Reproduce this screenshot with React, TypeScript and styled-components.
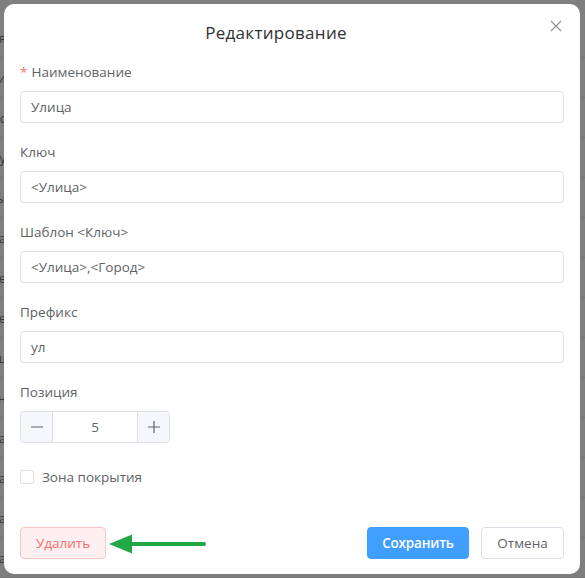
import React from "react";
import styled, { createGlobalStyle } from "styled-components";

const Global = createGlobalStyle`
  html, body { margin: 0; padding: 0; }
  body {
    width: 585px;
    height: 578px;
    overflow: hidden;
    background: #7f7f7f;
    font-family: "Open Sans", "Noto Sans", "DejaVu Sans", sans-serif;
  }
  * { box-sizing: border-box; }
`;

const Stage = styled.div`
  position: relative;
  width: 585px;
  height: 578px;
  background: #7f7f7f;
  overflow: hidden;
`;

const Behind = styled.div`
  display: flex;
  flex-direction: column;
  padding-top: 18px;
`;

const BehindRow = styled.div`
  height: 40px;
  display: flex;
  align-items: center;
  border-bottom: 1px solid #767676;
`;

const BehindCell = styled.div`
  width: 6px;
  overflow: hidden;
  direction: rtl;
  white-space: nowrap;
  font-size: 13px;
  color: #3a3a3a;
`;

const Dialog = styled.div`
  position: absolute;
  top: 4px;
  left: 4px;
  width: 576px;
  height: 570px;
  background: #fff;
  border-radius: 10px;
  display: flex;
  flex-direction: column;
`;

const Header = styled.div`
  position: relative;
  padding: 17px 48px 0 16px;
  text-align: center;
`;

const Title = styled.div`
  font-size: 17px;
  line-height: 24px;
  color: #303133;
  letter-spacing: 0.3px;
`;

const Close = styled.button`
  position: absolute;
  top: 16px;
  right: 18px;
  width: 12px;
  height: 12px;
  padding: 0;
  border: none;
  background: none;
  display: flex;
`;

const Body = styled.div`
  padding: 17px 16px 0;
  display: flex;
  flex-direction: column;
  flex: 1;
`;

const Field = styled.div`
  display: flex;
  flex-direction: column;
  margin-bottom: 19px;
`;

const Label = styled.label`
  font-size: 13.5px;
  line-height: 20px;
  color: #606266;
  margin-bottom: 9px;
`;

const Star = styled.span`
  color: #f56c6c;
  margin-right: 4px;
`;

const Input = styled.div`
  height: 32px;
  border: 1px solid #dcdfe6;
  border-radius: 4px;
  padding: 0 10px;
  display: flex;
  align-items: center;
  font-size: 13.5px;
  color: #606266;
`;

const Number = styled.div`
  width: 150px;
  height: 32px;
  border: 1px solid #dcdfe6;
  border-radius: 4px;
  display: flex;
  overflow: hidden;
`;

const Step = styled.div<{ $side: "left" | "right" }>`
  width: 32px;
  background: #f5f7fa;
  display: flex;
  align-items: center;
  justify-content: center;
  ${(p) => (p.$side === "left" ? "border-right" : "border-left")}: 1px solid #dcdfe6;
`;

const NumValue = styled.div`
  flex: 1;
  display: flex;
  align-items: center;
  justify-content: center;
  font-size: 13.5px;
  color: #606266;
`;

const CheckRow = styled.label`
  display: flex;
  align-items: center;
  height: 30px;
  gap: 8px;
`;

const Box = styled.span`
  width: 14px;
  height: 14px;
  border: 1px solid #dcdfe6;
  border-radius: 2px;
  background: #fff;
`;

const CheckText = styled.span`
  font-size: 13.5px;
  color: #606266;
`;

const Footer = styled.div`
  position: relative;
  display: flex;
  align-items: center;
  padding: 0 16px 15px;
  gap: 12px;
`;

const Button = styled.button<{ $kind: "danger" | "primary" | "plain" }>`
  height: 32px;
  padding: 0;
  border-radius: 4px;
  font-family: inherit;
  font-size: 13.5px;
  cursor: pointer;
  ${(p) =>
    p.$kind === "danger"
      ? `background:#fef0f0;border:1px solid #fbc4c4;color:#f56c6c;width:86px;`
      : p.$kind === "primary"
      ? `background:#409eff;border:1px solid #409eff;color:#fff;font-weight:600;width:102px;letter-spacing:-0.2px;`
      : `background:#fff;border:1px solid #dcdfe6;color:#606266;width:83px;`}
`;

const Spacer = styled.div`
  flex: 1;
`;

const Arrow = styled.svg`
  position: absolute;
  left: 101px;
  top: 5px;
`;

const rows = ["я", "и", "с", "у", "ы", "а", "е", "е", "ш", "н", "а", "а", "а", "а"];

export default function App() {
  return (
    <>
      <Global />
      <Stage>
        <Behind>
          {rows.map((r, i) => (
            <BehindRow key={i}>
              <BehindCell>{r}</BehindCell>
            </BehindRow>
          ))}
        </Behind>
        <Dialog>
          <Header>
            <Title>Редактирование</Title>
            <Close aria-label="close">
              <svg width="12" height="12" viewBox="0 0 12 12">
                <path d="M1 1L11 11M11 1L1 11" stroke="#909399" strokeWidth="1.2" />
              </svg>
            </Close>
          </Header>
          <Body>
            <Field>
              <Label>
                <Star>*</Star>Наименование
              </Label>
              <Input>Улица</Input>
            </Field>
            <Field>
              <Label>Ключ</Label>
              <Input>&lt;Улица&gt;</Input>
            </Field>
            <Field>
              <Label>Шаблон &lt;Ключ&gt;</Label>
              <Input>&lt;Улица&gt;,&lt;Город&gt;</Input>
            </Field>
            <Field>
              <Label>Префикс</Label>
              <Input>ул</Input>
            </Field>
            <Field>
              <Label>Позиция</Label>
              <Number>
                <Step $side="left">
                  <svg width="14" height="14" viewBox="0 0 14 14">
                    <path d="M1 7H13" stroke="#606266" strokeWidth="1.2" />
                  </svg>
                </Step>
                <NumValue>5</NumValue>
                <Step $side="right">
                  <svg width="14" height="14" viewBox="0 0 14 14">
                    <path d="M1 7H13M7 1V13" stroke="#606266" strokeWidth="1.2" />
                  </svg>
                </Step>
              </Number>
            </Field>
            <CheckRow>
              <Box />
              <CheckText>Зона покрытия</CheckText>
            </CheckRow>
          </Body>
          <Footer>
            <Button $kind="danger">Удалить</Button>
            <Spacer />
            <Button $kind="primary">Сохранить</Button>
            <Button $kind="plain">Отмена</Button>
            <Arrow width="104" height="24" viewBox="0 0 104 24">
              <path d="M4 12L27 2.5V21.5Z" fill="#22a845" />
              <path d="M25 12H99" stroke="#22a845" strokeWidth="4" strokeLinecap="round" />
            </Arrow>
          </Footer>
        </Dialog>
      </Stage>
    </>
  );
}
